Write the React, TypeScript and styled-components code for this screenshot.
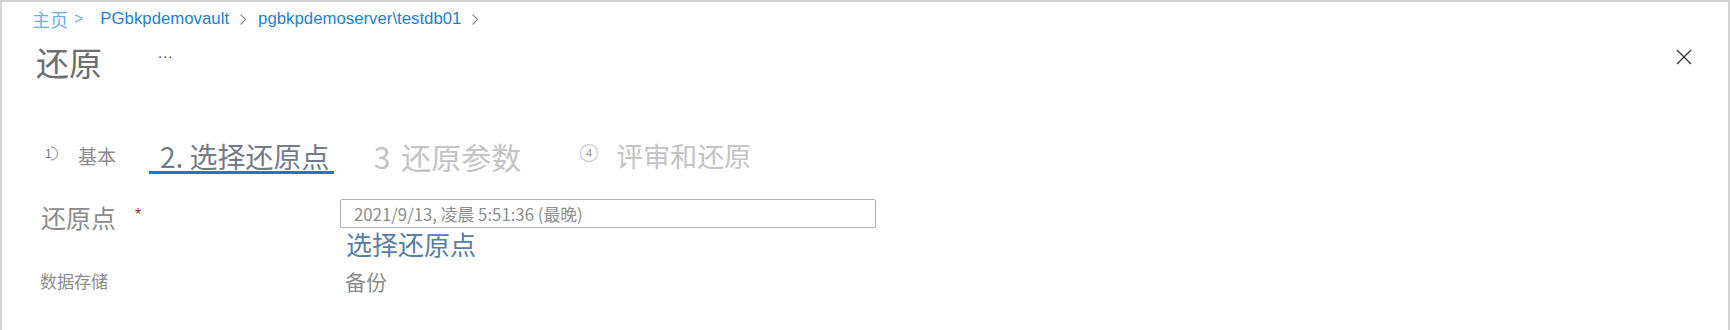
import React from "react";
import styled, { createGlobalStyle } from "styled-components";

const Global = createGlobalStyle`
  html, body { margin: 0; padding: 0; background: #ffffff; }
  body { font-family: "Noto Sans CJK SC", "Liberation Sans", sans-serif; }
  * { box-sizing: border-box; }
`;

const CJK = `"Noto Sans CJK SC", "Noto Sans", sans-serif`;
const LATIN = `"Liberation Sans", "Noto Sans CJK SC", sans-serif`;

const Page = styled.div`
  width: 1730px;
  height: 330px;
  border-top: 2px solid #d2d2d2;
  border-left: 2px solid #d2d2d2;
  border-right: 2px solid #d2d2d2;
  padding-left: 30px;
  display: flex;
  flex-direction: column;
  overflow: hidden;
`;

const Breadcrumb = styled.nav`
  height: 34px;
  display: flex;
  align-items: center;
`;

const Crumb = styled.span<{ $home?: boolean }>`
  font-family: ${(p) => (p.$home ? CJK : LATIN)};
  font-size: ${(p) => (p.$home ? "18px" : "16.8px")};
  color: ${(p) => (p.$home ? "#72ade4" : "#1f7fd3")};
`;

const HomeSep = styled.span`
  font-family: ${LATIN};
  font-size: 16px;
  color: #72ade4;
`;

const Sep = styled.span<{ $left: number; $right: number }>`
  margin: 0 ${(p) => p.$right}px 0 ${(p) => p.$left}px;
  display: inline-flex;
  align-items: center;
`;

const TitleRow = styled.div`
  height: 52px;
  display: flex;
  align-items: center;
  padding-right: 36px;
`;

const Title = styled.h1`
  margin: 0 0 0 4px;
  font-family: ${CJK};
  font-weight: 400;
  font-size: 33px;
  line-height: 52px;
  color: #6e6e6e;
`;

const More = styled.span`
  margin-left: 56px;
  margin-top: -20px;
  font-family: ${LATIN};
  font-size: 15px;
  letter-spacing: 1px;
  color: #444;
`;

const Close = styled.button`
  margin-left: auto;
  width: 16px;
  height: 16px;
  padding: 0;
  border: none;
  background: none;
  display: flex;
  align-items: center;
  justify-content: center;
  margin-top: -10px;
`;

const Tabs = styled.div`
  margin-top: 53px;
  display: flex;
  align-items: flex-start;
`;

const Tab = styled.div<{ $offset: number; $active?: boolean }>`
  margin-left: ${(p) => p.$offset}px;
  display: flex;
  align-items: center;
  height: 33px;
  padding: ${(p) => (p.$active ? "0 4px 0 11px" : "0")};
  border-bottom: 3px solid ${(p) => (p.$active ? "#1679d0" : "transparent")};
`;

const TabText = styled.span<{ $size: number; $color: string }>`
  font-family: ${CJK};
  font-size: ${(p) => p.$size}px;
  line-height: 30px;
  color: ${(p) => p.$color};
  white-space: pre;
`;

const StepNumber = styled.span`
  font-family: ${CJK};
  font-size: 30px;
  line-height: 30px;
  color: #c3c3c3;
  margin-right: 11px;
`;

const StepIcon = styled.span<{ $gap: number }>`
  display: inline-flex;
  margin-right: ${(p) => p.$gap}px;
  margin-top: -6px;
`;

const Form = styled.div`
  margin-top: 25px;
  display: flex;
  flex-direction: column;
`;

const Row = styled.div<{ $top?: number }>`
  display: flex;
  margin-top: ${(p) => p.$top ?? 0}px;
`;

const Label = styled.div<{ $size: number; $top?: number }>`
  width: 308px;
  padding-left: ${(p) => (p.$size > 20 ? 9 : 8)}px;
  margin-top: ${(p) => p.$top ?? 0}px;
  font-family: ${CJK};
  font-size: ${(p) => p.$size}px;
  line-height: 30px;
  color: #8c8c8c;
  display: flex;
  align-items: flex-start;
`;

const Required = styled.span`
  color: #a4262c;
  font-family: ${LATIN};
  font-size: 16px;
  line-height: 20px;
  margin: 3px 0 0 19px;
`;

const Field = styled.div`
  display: flex;
  flex-direction: column;
`;

const Input = styled.div`
  width: 536px;
  height: 29px;
  border: 1px solid #b4b4b4;
  border-radius: 2px;
  padding-left: 13px;
  display: flex;
  align-items: center;
  font-family: ${CJK};
  font-size: 16.8px;
  color: #8e8e8e;
`;

const Link = styled.a`
  margin: 1px 0 0 6px;
  font-family: ${CJK};
  font-size: 26px;
  line-height: 30px;
  color: #557ea8;
  text-decoration: none;
`;

const Value = styled.div`
  padding-left: 5px;
  font-family: ${CJK};
  font-size: 21px;
  line-height: 30px;
  color: #8c8c8c;
`;

const Chevron = ({ color }: { color: string }) => (
  <svg width="8" height="13" viewBox="0 0 8 13">
    <path d="M1.5 1.5 L6.5 6.5 L1.5 11.5" fill="none" stroke={color} strokeWidth="1.2" />
  </svg>
);

export default function App() {
  return (
    <>
      <Global />
      <Page>
        <Breadcrumb>
          <Crumb $home>主页</Crumb>
          <Sep $left={6} $right={17}>
            <HomeSep>&gt;</HomeSep>
          </Sep>
          <Crumb>PGbkpdemovault</Crumb>
          <Sep $left={10} $right={11}>
            <Chevron color="#8f8f8f" />
          </Sep>
          <Crumb>pgbkpdemoserver\testdb01</Crumb>
          <Sep $left={10} $right={0}>
            <Chevron color="#8f8f8f" />
          </Sep>
        </Breadcrumb>
        <TitleRow>
          <Title>还原</Title>
          <More>...</More>
          <Close aria-label="关闭">
            <svg width="16" height="16" viewBox="0 0 16 16">
              <path d="M1 1 L15 15 M15 1 L1 15" stroke="#333" strokeWidth="1.3" fill="none" />
            </svg>
          </Close>
        </TitleRow>
        <Tabs>
          <Tab $offset={10}>
            <StepIcon $gap={20}>
              <svg width="16" height="17" viewBox="0 0 16 17">
                <path d="M9 2 A6.5 6.5 0 0 1 9 15" stroke="#a8a8a8" strokeWidth="1.3" fill="none" />
                <text x="3" y="12.5" fontSize="12" fontFamily="Liberation Sans" fill="#7a7a7a">1</text>
              </svg>
            </StepIcon>
            <TabText $size={19} $color="#8a8a8a">基本</TabText>
          </Tab>
          <Tab $offset={33} $active>
            <TabText $size={28} $color="#737b87">2. 选择还原点</TabText>
          </Tab>
          <Tab $offset={40}>
            <StepNumber>3</StepNumber>
            <TabText $size={30} $color="#c3c3c3">还原参数</TabText>
          </Tab>
          <Tab $offset={58}>
            <StepIcon $gap={17}>
              <svg width="20" height="20" viewBox="0 0 20 20">
                <circle cx="10" cy="10" r="8.5" stroke="#cfcfcf" strokeWidth="1.4" fill="none" />
                <text x="10" y="14" textAnchor="middle" fontSize="11.5" fontFamily="Liberation Sans" fill="#9a9a9a">4</text>
              </svg>
            </StepIcon>
            <TabText $size={27} $color="#c3c3c3">评审和还原</TabText>
          </Tab>
        </Tabs>
        <Form>
          <Row>
            <Label $size={25} $top={3}>
              还原点<Required>*</Required>
            </Label>
            <Field>
              <Input>2021/9/13, 凌晨 5:51:36 (最晚)</Input>
              <Link href="#">选择还原点</Link>
            </Field>
          </Row>
          <Row $top={7}>
            <Label $size={17}>数据存储</Label>
            <Value>备份</Value>
          </Row>
        </Form>
      </Page>
    </>
  );
}
